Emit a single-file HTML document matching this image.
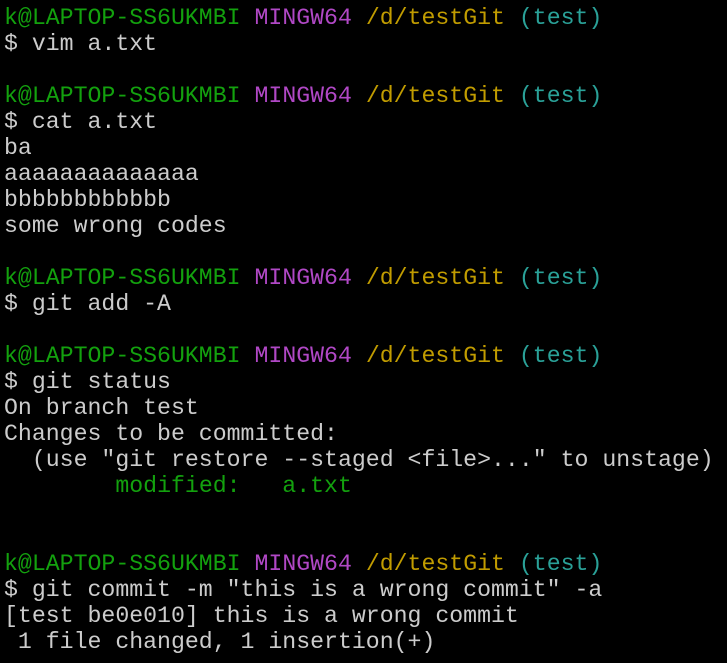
<!DOCTYPE html>
<html><head><meta charset="utf-8"><style>
html,body{margin:0;padding:0;background:#000;width:727px;height:663px;overflow:hidden}
pre{margin:0;position:absolute;left:4px;top:5px;font-family:"Liberation Mono",monospace;font-size:23.2px;line-height:26px;color:#cccccc;white-space:pre}
.g{color:#13a10e}.m{color:#b148c6}.y{color:#c19c00}.c{color:#2aa198}
</style></head><body><pre><span class="g">k@LAPTOP-SS6UKMBI</span> <span class="m">MINGW64</span> <span class="y">/d/testGit</span> <span class="c">(test)</span>
$ vim a.txt

<span class="g">k@LAPTOP-SS6UKMBI</span> <span class="m">MINGW64</span> <span class="y">/d/testGit</span> <span class="c">(test)</span>
$ cat a.txt
ba
aaaaaaaaaaaaaa
bbbbbbbbbbbb
some wrong codes

<span class="g">k@LAPTOP-SS6UKMBI</span> <span class="m">MINGW64</span> <span class="y">/d/testGit</span> <span class="c">(test)</span>
$ git add -A

<span class="g">k@LAPTOP-SS6UKMBI</span> <span class="m">MINGW64</span> <span class="y">/d/testGit</span> <span class="c">(test)</span>
$ git status
On branch test
Changes to be committed:
  (use "git restore --staged &lt;file&gt;..." to unstage)
        <span class="g">modified:   a.txt</span>


<span class="g">k@LAPTOP-SS6UKMBI</span> <span class="m">MINGW64</span> <span class="y">/d/testGit</span> <span class="c">(test)</span>
$ git commit -m "this is a wrong commit" -a
[test be0e010] this is a wrong commit
 1 file changed, 1 insertion(+)</pre></body></html>
